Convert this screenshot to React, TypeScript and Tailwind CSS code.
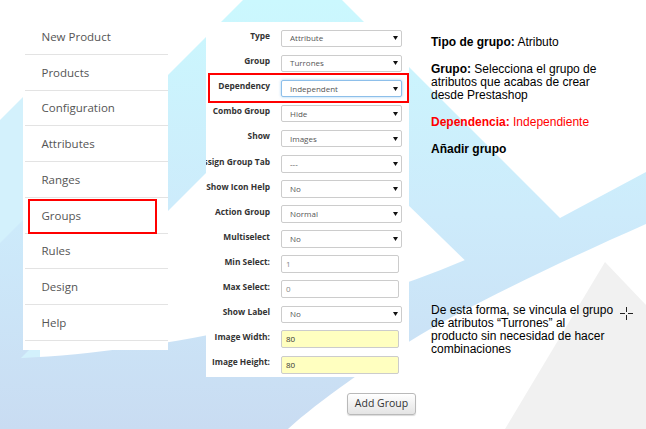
import React from 'react';

const navItems = ['New Product', 'Products', 'Configuration', 'Attributes', 'Ranges', 'Groups', 'Rules', 'Design', 'Help'];

type Field = {
  label: string;
  kind: 'select' | 'text' | 'yellow';
  value: string;
  focus?: boolean;
};

const fields: Field[] = [
  { label: 'Type', kind: 'select', value: 'Attribute' },
  { label: 'Group', kind: 'select', value: 'Turrones' },
  { label: 'Dependency', kind: 'select', value: 'Independent', focus: true },
  { label: 'Combo Group', kind: 'select', value: 'Hide' },
  { label: 'Show', kind: 'select', value: 'Images' },
  { label: 'Assign Group Tab', kind: 'select', value: '---' },
  { label: 'Show Icon Help', kind: 'select', value: 'No' },
  { label: 'Action Group', kind: 'select', value: 'Normal' },
  { label: 'Multiselect', kind: 'select', value: 'No' },
  { label: 'Min Select:', kind: 'text', value: '1' },
  { label: 'Max Select:', kind: 'text', value: '0' },
  { label: 'Show Label', kind: 'select', value: 'No' },
  { label: 'Image Width:', kind: 'yellow', value: '80' },
  { label: 'Image Height:', kind: 'yellow', value: '80' },
];

function Backdrop() {
  return (
    <svg className="absolute inset-0" width="646" height="429" viewBox="0 0 646 429">
      <defs>
        <linearGradient id="sky" x1="0" y1="0" x2="0" y2="429" gradientUnits="userSpaceOnUse">
          <stop offset="0" stopColor="#cbf8fe" />
          <stop offset="0.5" stopColor="#cdebfb" />
          <stop offset="1" stopColor="#c9dcf2" />
        </linearGradient>
      </defs>
      <polygon points="605,262 646,305 646,429 505,429" fill="#f1f1f1" />
      {/* soft wedge along the left margin */}
      <polygon points="0,120 40,80 40,379 0,379" fill="#d3f1fc" />
      <polygon
        points="292.5,-49.5 560,218 646,172 646,200 480,275 289.5,89.5 0,379 0,243"
        fill="url(#sky)"
      />
      <path
        d="M0,360 L22,358 C150,352 330,318 465,260 C540,232 600,205 646,185 L646,224 C560,262 470,305 420,335 C370,365 320,400 288,429 L0,429 Z"
        fill="url(#sky)"
      />
    </svg>
  );
}

function Control({ field }: { field: Field }) {
  if (field.kind === 'select') {
    return (
      <div
        className={
          field.focus
            ? 'ml-[11px] flex h-[17.5px] w-[121px] items-center justify-between rounded-[2px] border border-[#8dbfea] bg-white pl-[8px] pr-[3px] text-[8px] text-[#555] shadow-[0_0_3px_rgba(102,175,233,0.6)]'
            : 'ml-[11px] flex h-[17.5px] w-[121px] items-center justify-between rounded-[2px] border border-[#ccc] bg-white pl-[8px] pr-[3px] text-[8px] text-[#555]'
        }
      >
        <span>{field.value}</span>
        <svg width="5" height="4" viewBox="0 0 5 4">
          <polygon points="0,0 5,0 2.5,4" fill="#111" />
        </svg>
      </div>
    );
  }
  return (
    <div
      className={
        field.kind === 'yellow'
          ? 'ml-[11px] flex h-[18px] w-[118px] items-center rounded-[2px] border border-[#ccc] bg-[#ffffc0] pl-[4px] text-[8px] text-[#333]'
          : 'ml-[11px] flex h-[18px] w-[118px] items-center rounded-[2px] border border-[#ccc] bg-white pl-[4px] text-[8px] text-[#888]'
      }
    >
      {field.value}
    </div>
  );
}

export default function App() {
  return (
    <div className="relative h-[429px] w-[646px] overflow-hidden bg-white font-['Open_Sans',sans-serif]">
      <Backdrop />

      <div className="relative flex items-start">
        {/* side menu */}
        <div className="ml-[23px] mt-[19px] w-[145px] bg-white pb-[9px]">
          {navItems.map((item) => (
            <div
              key={item}
              className="relative ml-[2px] flex h-[35.75px] items-center border-b border-[#e3e3e3] pl-[16.5px] text-[11.5px] text-[#555]"
            >
              {item}
              {item === 'Groups' && (
                <div className="absolute left-[3px] right-[11px] top-[1.7px] bottom-[-1px] border-2 border-[#f00]" />
              )}
            </div>
          ))}
        </div>

        {/* group form */}
        <div className="ml-[38px] mt-[22px] flex w-[210px] flex-col">
          <div className="w-[203px] overflow-hidden bg-white pt-[3.8px]">
            {fields.map((field) => (
              <div key={field.label} className="relative flex h-[25.1px] items-center">
                <div className="flex w-[64px] shrink-0 justify-end pb-[4px]">
                  <span className="whitespace-nowrap text-[8.4px] font-bold text-[#333]">{field.label}</span>
                </div>
                <Control field={field} />
                {field.focus && (
                  <div className="absolute left-[2px] right-0 top-[-2.7px] bottom-[-1.6px] border-2 border-[#f00]" />
                )}
              </div>
            ))}
          </div>
          <button className="mt-[16px] self-end h-[22px] w-[69px] rounded-[3px] border border-[#b9b9b9] bg-gradient-to-b from-white to-[#e4e4e4] text-[10.5px] text-[#333] shadow-[0_1px_1px_rgba(0,0,0,0.15)]">
            Add Group
          </button>
        </div>

        {/* notes */}
        <div className="ml-[15px] mt-[36px] w-[200px] font-['Liberation_Sans',Arial,sans-serif] text-[12px] leading-[13px] text-black">
          <p>
            <b>Tipo de grupo:</b> Atributo
          </p>
          <p className="mt-[14px]">
            <b>Grupo:</b> Selecciona el grupo de
            <br />
            atributos que acabas de crear
            <br />
            desde Prestashop
          </p>
          <p className="mt-[14px] text-[#f00]">
            <b>Dependencia:</b> Independiente
          </p>
          <p className="mt-[14px]">
            <b>Añadir grupo</b>
          </p>
          <p className="mt-[147.6px]">
            De esta forma, se vincula el grupo
            <br />
            de atributos “Turrones” al
            <br />
            producto sin necesidad de hacer
            <br />
            combinaciones
          </p>
        </div>
      </div>

      {/* crosshair pointer */}
      <svg className="absolute left-[620px] top-[307px]" width="13" height="13" viewBox="0 0 13 13">
        <path d="M0 6.5H5M8 6.5H13M6.5 0V5M6.5 8V13" stroke="#222" strokeWidth="1" />
      </svg>
    </div>
  );
}
